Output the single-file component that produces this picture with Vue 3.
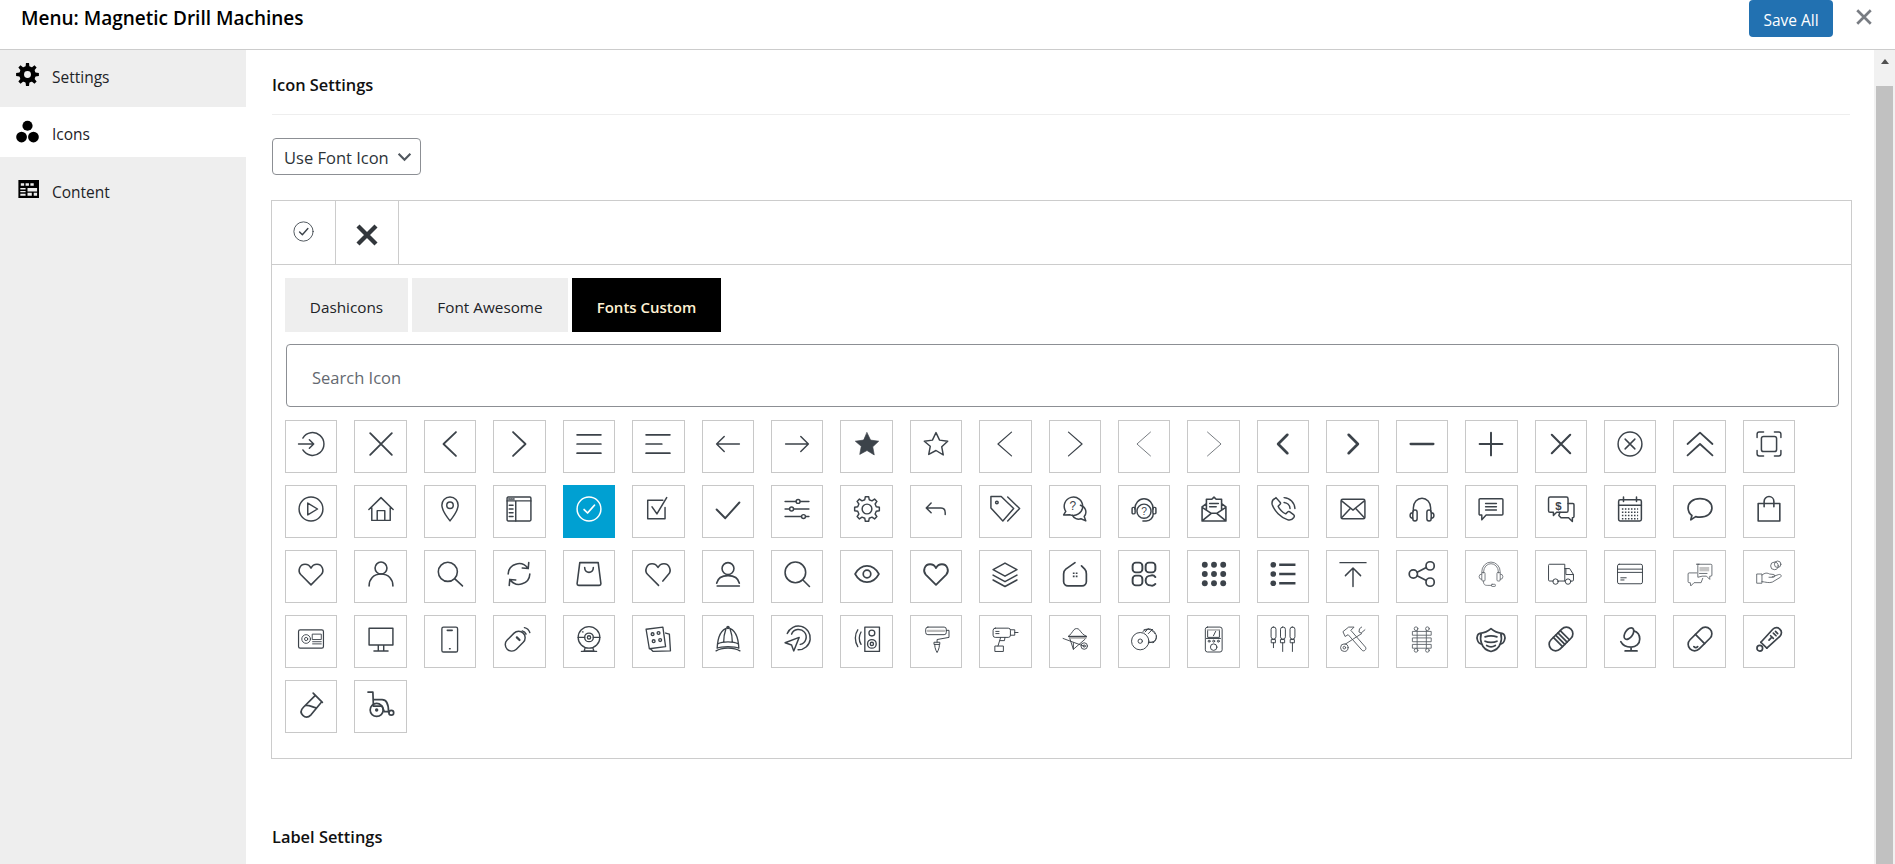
<script setup>
function gear(cx, cy, ro, ri, n) {
  let d = ''
  const step = (Math.PI * 2) / n
  for (let i = 0; i < n; i++) {
    const a = i * step - Math.PI / 2
    const pts = [
      [ri, a - step * 0.3],
      [ro, a - step * 0.17],
      [ro, a + step * 0.17],
      [ri, a + step * 0.3]
    ]
    pts.forEach(([r, t], j) => {
      const x = (cx + r * Math.cos(t)).toFixed(2)
      const y = (cy + r * Math.sin(t)).toFixed(2)
      d += (i === 0 && j === 0 ? 'M' : 'L') + x + ' ' + y
    })
  }
  return d + 'z'
}
const qm = (x, y, s) => `<text x="${x}" y="${y}" font-size="${s}" text-anchor="middle" fill="currentColor" stroke="none" font-family="Liberation Sans">?</text>`
const w = (sw, inner) => `<g stroke-width="${sw >= 1 ? (sw * 1.12).toFixed(2) : sw}">${inner}</g>`
const heart = 'M12 22 2.5 12.5C-.5 9 1.5 3 6.5 3 9 3 11 4.5 12 6.5 13 4.5 15 3 17.5 3c5 0 7 6 4 9.5z'
const checkCircle = '<circle cx="12" cy="12" r="11"/><path d="M7.5 12.5l3.2 3.2L17 8.5" stroke-width="1.6"/>'

const icons = [
  // row 1
  '<path d="M4.5 6.5a10.5 10.5 0 1 1 0 11"/><path d="M.5 12h14M10.5 8l4 4-4 4"/>',
  w(1.5, '<path d="M2 2l20 20M22 2 2 22"/>'),
  w(1.5, '<path d="M17.5 1 6 12l11.5 11"/>'),
  w(1.5, '<path d="M6.5 1 18 12 6.5 23"/>'),
  w(1.4, '<path d="M1 3.5h22M1 12h22M1 20.5h22"/>'),
  w(1.4, '<path d="M1 3.5h22M1 12h14.5M1 20.5h22"/>'),
  '<path d="M1.5 12h21M8.5 5l-7 7 7 7"/>',
  '<path d="M1.5 12h21M15.5 5l7 7-7 7"/>',
  '<path fill="currentColor" stroke-width=".6" d="M12 1.5l3.3 6.9 7.5 1-5.5 5.2 1.4 7.5L12 18l-6.7 3.6 1.4-7.5L1.2 9.4l7.5-1z"/>',
  '<path d="M12 1.5l3.3 6.9 7.5 1-5.5 5.2 1.4 7.5L12 18l-6.7 3.6 1.4-7.5L1.2 9.4l7.5-1z"/>',
  w(1, '<path d="M18 1 5.5 12 18 23"/>'),
  w(1, '<path d="M6 1l12.5 11L6 23"/>'),
  '<g stroke-width=".75" opacity=".85"><path d="M18 1 5.5 12 18 23"/></g>',
  '<g stroke-width=".75" opacity=".85"><path d="M6 1l12.5 11L6 23"/></g>',
  w(2.2, '<path d="M16 3.5 7.5 12l8.5 8.5"/>'),
  w(2.2, '<path d="M8 3.5l8.5 8.5L8 20.5"/>'),
  w(1.9, '<path d="M1.5 12h21"/>'),
  w(1.6, '<path d="M1.5 12h21M12 1.5v21"/>'),
  w(1.7, '<path d="M3.5 3.5l17 17M20.5 3.5l-17 17"/>'),
  '<circle cx="12" cy="12" r="11"/><path d="M7.5 7.5l9 9M16.5 7.5l-9 9"/>',
  w(1.5, '<path d="M.5 12 12 1.5 23.5 12M.5 22.5 12 12l11.5 10.5"/>'),
  '<path d="M1 6V3a2 2 0 0 1 2-2h4M17 1h4a2 2 0 0 1 2 2v3M23 18v3a2 2 0 0 1-2 2h-4M7 23H3a2 2 0 0 1-2-2v-3"/><rect x="5" y="5" width="14" height="14" rx="2" stroke-width="1.4"/>',
  // row 2
  '<circle cx="12" cy="12" r="11"/><path d="M9 6.5 18 12l-9 5.5z"/>',
  '<path d="M.8 12.5 12 1.5l11.2 11M3.5 10.5v12h17v-12M8.5 22.5v-9h7v9"/>',
  '<path d="M12 1C7.5 1 4.5 4.5 4.5 8.5c0 5 7.5 14.5 7.5 14.5s7.5-9.5 7.5-14.5C19.5 4.5 16.5 1 12 1z"/><circle cx="12" cy="8.5" r="3"/>',
  '<rect x="1" y="1" width="22" height="22" rx="1"/><path d="M1 4.5h22M9 4.5V23M3 8.5h3.5M3 12h3.5M3 15.5h3.5M3 19h3.5M2.5 2.8h1M4.5 2.8h1M6.5 2.8h1"/>',
  checkCircle,
  '<path d="M18.5 10.5V21H2.5V4h14"/><path d="M6.5 10l4.5 6.5L20 1.5" stroke-width="1.4"/>',
  w(1.6, '<path d="M1.5 12.5l8 8L22.5 6"/>'),
  '<path d="M1 5h22M1 12h22M1 19h22"/><circle cx="13" cy="5" r="1.8" fill="#fff"/><circle cx="7" cy="12" r="1.8" fill="#fff"/><circle cx="18" cy="19" r="1.8" fill="#fff"/>',
  `<path d="${gear(12, 12, 11.5, 8.8, 8)}"/><circle cx="12" cy="12" r="4.5"/>`,
  '<path d="M7.5 6.5 3 11l4.5 4.5M3 11h13.5c2.5 0 4 1.7 4 4.5v1.5"/>',
  '<path d="M-1 .5h9.5L20 11.500 10 23-1 11z"/><path d="M14.500 1 25.500 11.500 14.500 23"/><circle cx="4.500" cy="6" r="1.200"/>',
  `<path d="M1.500 17.500l2-3.300a8.500 8.500 0 1 1 4 3.200z"/><path d="M17 8.500a6.500 6.500 0 0 1 3.500 10.500l1.500 4-4.500-2a6.500 6.500 0 0 1-8-3.300"/>${qm(10, 13, 11)}`,
  `<circle cx="12" cy="14" r="6.500"/><path d="M3.500 12a8.500 9.500 0 0 1 17 0"/><rect x="1" y="10.500" width="2.800" height="6" rx="1"/><rect x="20.200" y="10.500" width="2.800" height="6" rx="1"/><path d="M20.500 16.500c0 3.500-2.500 6.500-6.500 6.500h-3"/>${qm(12, 17.500, 9.500)}`,
  w(1.3, '<path d="M1 10v13h22V10M1 10l4-3M23 10l-4-3M1 23l8.500-7h5L23 23M1 10.500l8.500 5.500M23 10.500l-8.500 5.500M5 13V3h5l2-2 2 2h5v10M8 7h8M8 10h6"/>'),
  '<path d="M5.500 1.500 9.500 6c.5.700.3 1.200-.2 1.700L7.500 9.500c1 2.500 4.500 6 7 7l1.800-1.800c.5-.5 1-.7 1.700-.2l4 3c.8.700.5 1.500 0 2.300-1.500 2-3.500 3-6 2-6-2-12-8-14-14-.5-2.500.5-4.500 2.500-5.500.6-.4 1-.4 1.500 0z"/><path d="M13 6a6 6 0 0 1 5.500 5.500M13 1.500a10.500 10.500 0 0 1 10 10"/>',
  '<rect x="1" y="3" width="22" height="18" rx="1.500"/><path d="M1.500 4.500 12 13l10.500-8.500M1.500 20l8-8.500M22.500 20l-8-8.500"/>',
  '<path d="M4 14v-3a8 9 0 0 1 16 0v3"/><rect x="3.500" y="13" width="4" height="10" rx="2"/><rect x="16.500" y="13" width="4" height="10" rx="2"/><path d="M3.500 15.500a2.500 2.500 0 0 0 0 5M20.500 15.500a2.500 2.500 0 0 1 0 5"/>',
  '<path d="M2 2.500h20a1 1 0 0 1 1 1v13a1 1 0 0 1-1 1H7.500l-4 4.500v-4.500H2a1 1 0 0 1-1-1v-13a1 1 0 0 1 1-1z"/><path d="M7 7h10M7 10h10M7 13h10"/>',
  '<path d="M2 1h15a1.500 1.500 0 0 1 1.500 1.500v11a1.500 1.500 0 0 1-1.500 1.500H8l-3 3v-3H2a1.500 1.500 0 0 1-1.500-1.500v-11A1.500 1.500 0 0 1 2 1z"/><path d="M18.500 7H23a1 1 0 0 1 1 1v11a1 1 0 0 1-1 1h-.5v3.500L19 20h-7l-2-2 1-3"/><text x="9.500" y="12.500" font-size="10.500" font-weight="700" text-anchor="middle" fill="currentColor" stroke="none" font-family="Liberation Sans">$</text>',
  '<rect x="1.500" y="3.500" width="21" height="19.500" rx="1.500" stroke-width="1.400"/><path d="M1.500 8.500h21M6 1v4M18 1v4" stroke-width="1.400"/><path d="M4.500 12h15M4.500 15h15M4.500 18h15M4.500 21h15" stroke-dasharray="1.400 1.400" stroke-width="1.200" stroke-linecap="butt"/>',
  w(1.4, '<path d="M12 2.500c6.500 0 11 3.500 11 8.500s-4.500 8.500-11 8.500c-1.200 0-2.500-.1-4-.5L3.500 22l1-4C2.500 16.500 1 14 1 11c0-5 4.500-8.500 11-8.500z"/>'),
  w(1.3, '<path d="M2 7h20v16H2zM7.500 10V5a4.500 4.500 0 0 1 9 0v5"/>'),
  // row 3
  w(1.3, `<path d="${heart}"/>`),
  w(1.3, '<circle cx="12" cy="6.500" r="5.500"/><path d="M1 23c0-6 4-11 11-11s11 5 11 11"/>'),
  w(1.3, '<circle cx="10" cy="10" r="8.800"/><path d="M16.500 16.500l7 6.500"/>'),
  w(1.3, '<path d="M2 12A10 10 0 0 1 20 6.500M21 1.500 20.500 7l-5.500-.5M22 12A10 10 0 0 1 4 17.500M3 22.500 3.500 17l5.500.5"/>'),
  w(1.3, '<path d="M3.500 1.500h17L23 21a1.500 1.500 0 0 1-1.500 1.500h-19A1.500 1.500 0 0 1 1 21zM8 6c0 6 8 6 8 0"/>'),
  w(1.3, '<path d="M12.500 22.500 2.500 12.500C-1 9 1.500 2.500 6.500 2.500c2.500 0 4.500 1.500 5.500 3.500 1-2 3-3.500 5.500-3.500 5 0 7.500 6.500 4 10L16.500 18.500"/>'),
  w(1.3, '<circle cx="12" cy="7" r="5.500"/><path d="M1.500 20.500C2.500 16 6.500 13.500 12 13.500s9.500 2.500 10.500 7M2 23h20.500"/>'),
  w(1.3, '<circle cx="10.500" cy="10.500" r="9.500"/><path d="M17.500 17.500l6 6"/>'),
  w(1.4, '<path d="M1 12C4 6.500 8 4.500 12 4.500s8 2 11 7.500c-3 5.500-7 7.500-11 7.500S4 17.500 1 12z"/><circle cx="12" cy="12" r="3.500"/>'),
  w(1.5, `<path d="${heart}"/>`),
  w(1.3, '<path d="M12 2 23 8 12 14 1 8zM1 13l11 6 11-6M1 17.500l11 6 11-6"/>'),
  w(1.4, '<path d="M12 1.500 3.500 7.500C1.500 9 1.500 10 1.500 12v7a4 4 0 0 0 4 4h13a4 4 0 0 0 4-4v-7c0-2 0-3-1.500-4.500L18 4.500"/><path fill="currentColor" stroke="none" d="M10 10.500h1.600v1.600H10zM12.700 10.500h1.600v1.600h-1.600zM10 13.300h1.600v1.600H10zM12.700 13.300h1.600v1.600h-1.600z"/>'),
  w(1.6, '<rect x="1.500" y="1.500" width="9" height="9" rx="3"/><rect x="13.500" y="1.500" width="9" height="9" rx="3"/><rect x="1.500" y="13.500" width="9" height="9" rx="3"/><path d="M22.500 14.800A4 4 0 0 0 18 13.500a4.500 4.500 0 0 0 0 9 4 4 0 0 0 4.500-1.300"/>'),
  '<g fill="currentColor" stroke="none"><circle cx="3.500" cy="3.500" r="2.700"/><circle cx="12" cy="3.500" r="2.700"/><circle cx="20.500" cy="3.500" r="2.700"/><circle cx="3.500" cy="12" r="2.700"/><circle cx="12" cy="12" r="2.700"/><circle cx="20.500" cy="12" r="2.700"/><circle cx="3.500" cy="20.500" r="2.700"/><circle cx="12" cy="20.500" r="2.700"/><circle cx="20.500" cy="20.500" r="2.700"/></g>',
  '<g fill="currentColor" stroke="none"><circle cx="3" cy="3.500" r="2.600"/><circle cx="3" cy="12" r="2.600"/><circle cx="3" cy="20.500" r="2.600"/></g><path d="M8.500 3.500h15M8.500 12h15M8.500 20.500h15" stroke-width="2.200" stroke-linecap="butt"/>',
  '<path d="M0 1.500h24M12 23.500V7M5 13.500 12 6.500l7 7"/>',
  w(1.4, '<circle cx="19.500" cy="4.500" r="3.800"/><circle cx="4" cy="12" r="3.800"/><circle cx="19.500" cy="19.500" r="3.800"/><path d="M7.500 10.300l8.500-4.200M7.500 13.700l8.500 4.200"/>'),
  '<g stroke-width=".75" opacity=".8"><path d="M3.500 11v-1a8.500 9 0 0 1 17 0v1M5.200 11v-1a6.800 7.500 0 0 1 13.600 0v1"/><rect x="3.500" y="10.500" width="3" height="8" rx="1"/><rect x="17.500" y="10.500" width="3" height="8" rx="1"/><path d="M3.500 12a2 2 0 0 0 0 5M20.500 12a2 2 0 0 1 0 5M5 18.500c0 3 1 4 3.500 4h4"/><rect x="12.500" y="21.500" width="3.500" height="2" rx=".5"/></g>',
  '<g stroke-width=".9"><path d="M5 18.500H1.500a1 1 0 0 1-1-1V4a1 1 0 0 1 1-1h14v15.500H9M15.500 7H20l3.500 5.500v5a1 1 0 0 1-1 1H21M15.500 18.500h.5M16.500 7v5.500h7"/><circle cx="7" cy="19" r="2.500"/><circle cx="18.500" cy="19" r="2.500"/></g>',
  '<g stroke-width=".9"><rect x=".5" y="3" width="23" height="18" rx="1.500"/><path d="M.5 7.500h23M.5 10.500h23M3.500 15.500h5M3.500 17.500h3"/></g>',
  '<g stroke-width=".8" opacity=".85"><path d="M9 3h13a1 1 0 0 1 1 1v9a1 1 0 0 1-1 1h-1v3l-3-3h-4l-4 1V4a1 1 0 0 1 1-1z"/><path d="M9 11H2a1 1 0 0 0-1 1v7a1 1 0 0 0 1 1h1l.5 3 3-3H13l1.500-4"/><path d="M11.500 5.500h9v4h-9z" fill="#bbb" stroke="none"/><path d="M11.500 11.500h7"/></g>',
  '<g stroke-width=".8" opacity=".85"><circle cx="17" cy="4.500" r="3.500"/><circle cx="20" cy="3" r="3"/><path d="M1 12h4.500v8.500H1zM5.500 13c3-2.500 5-2 7-1l4 .5c1.500.5 1 2.500-.5 2.500h-4M15 14.500l6-2c2-.5 3 1.200 1.500 2.500L15 19.500c-3 1-6 0-9.500-.5"/></g>',
  // row 4
  '<g stroke-width=".85"><rect x=".5" y="3.500" width="23" height="17" rx="1.500" stroke-width="1.100"/><circle cx="7.500" cy="12" r="4"/><circle cx="7.500" cy="12" r="1.500"/><path d="M13.500 7.500h8v5h-8zM13.500 14.500h8M13.500 16.500h8"/></g>',
  w(1.2, '<path d="M1 2h22v15.500H1zM9.500 17.500V23M14.500 17.500V23M5.500 23h13"/>'),
  w(1.1, '<rect x="4.500" y="1" width="14.500" height="23" rx="1.500"/><path d="M9.500 4h4.500" stroke-width="1.500"/><path d="M11.500 21h.7"/>'),
  w(1.2, '<rect x="-2" y="8" width="21" height="12" rx="6" transform="rotate(-45 8.500 14)"/><path d="M10 10.500l2.500 2.500" stroke-width="2"/><path d="M15 4.500a5 5 0 0 1 3.500 3M17 1.500a7 7 0 0 1 5 4.500"/>'),
  w(1.1, '<circle cx="12" cy="10.500" r="10"/><circle cx="12" cy="10.500" r="4"/><circle cx="12" cy="10.500" r="1.500"/><path d="M2 10.500h6M16 10.500h6M8.500 20l-1 3h9l-1-3M5 23.500h14M6 5.500h.5"/>'),
  w(1.1, '<path d="M1 3l15.500-2 2.500 18L4 21z"/><path d="M19 6.500l3.500 1L23.500 23l-16 .5-2.500-2.500"/><circle cx="7" cy="7.500" r="1.300"/><circle cx="12.500" cy="6.500" r="1.300"/><circle cx="8" cy="14" r="1.300"/><circle cx="14" cy="13" r="1.300"/>'),
  w(1.1, '<path d="M12 1.500C6 3 2.500 9 2 20.500 6 18.500 18 18.500 22 20.500 21.500 9 18 3 12 1.500zM2.500 16.500C7 14 17 14 21.500 16.500M10 3C8.500 7 8 10 8 15M14 3c1.500 4 2 7 2 12M1 23c5-3.500 17-3.500 22 0"/><circle cx="12" cy="1.300" r="1"/>'),
  w(1.2, '<path d="M3 7A11 11 0 1 1 13 22M7 7.500a7 7 0 1 1 8 9.500"/><path d="M1 15.500l13-5-5 12.500-2-5.500z"/>'),
  w(1.1, '<path d="M10 1h13.500v22.500H10z"/><circle cx="16.500" cy="6.500" r="2.700"/><circle cx="16.500" cy="16.500" r="4"/><circle cx="16.500" cy="16.500" r="1.500"/><path d="M6.500 5.500c-2 3.500-2 8 0 11.500M3.500 3.500c-3 4-3 11 0 15.500"/>'),
  '<g stroke-width=".9" transform="translate(1.500 0)"><rect x="1" y="1" width="19" height="7" rx="2"/><path d="M20 4h2.500v6.500l-11 2V15"/><path d="M9 15h5v2H9zM9.500 17c-.5 2 .5 4 1 5.500l1 2 1-2c.5-1.500 1.500-3.500 1-5.500"/><path d="M3 4.500h15" stroke="#bbb" stroke-width="2"/></g>',
  '<g stroke-width=".9"><rect x="1" y="2" width="16" height="8.500" rx="2"/><path d="M3.500 5h3M3.500 7h3M17 3.500h4v5h-4M21 6h3M8 10.500l-2.500 8M12 10.500l-.5 3h-4M3 18.500h7.500v5H3z"/></g>',
  '<g stroke-width=".85"><path d="M6 9.500C8 8 9 6 11 3.500c1-1.500 4-1.500 5 0 2 2.500 3 4.500 6.500 6zM6 9.500h16.500l-1 2.500-11 9.500-4-12M1 11.500l19 7M10.500 21.500v-6"/><circle cx="20.500" cy="18.500" r="3"/><circle cx="20.500" cy="18.500" r="1"/><path d="M7 11h15" stroke="#aaa" stroke-width="1.500"/></g>',
  '<g stroke-width=".9"><circle cx="8.500" cy="14" r="8"/><circle cx="8.500" cy="14" r="2"/><path d="M11 5c4-3 8-3.500 11 1s1 8-3 9l-3 .5M12 3.500c4-1.500 8 0 10 3.500M16 2.500l-3 3M20 3l-4 4M23.500 9c0 3-1 5.500-3 6.500M16.500 15h4"/></g>',
  '<g stroke-width=".9"><rect x="4" y="1" width="15.500" height="23" rx="2"/><path d="M6.500 3.500H17v7H6.500zM13.500 5l-2 4M5 11.500h13"/><path d="M6 3.500h11" stroke="#bbb" stroke-width="1.500"/><circle cx="7.500" cy="14" r=".9"/><circle cx="11.700" cy="14" r=".9"/><circle cx="16" cy="14" r=".9"/><circle cx="11.700" cy="19.500" r="3"/></g>',
  '<g stroke-width=".9"><rect x="1" y="1" width="4.500" height="11" rx="2"/><rect x="9.700" y="1" width="4.500" height="11" rx="2"/><rect x="18.500" y="1" width="4.500" height="11" rx="2"/><path d="M1.500 12.500H5v3H1.500zM10 12.500h3.500v3H10zM19 12.500h3.500v3H19zM3.200 15.500V20M11.700 15.500v8M20.700 15.500v8"/></g>',
  '<g stroke-width=".85" opacity=".9"><path d="M3 5l5-4h5l-3 3 13.500 15.500c1.500 2-1.500 4.500-3 3L7.500 8 5 9.500z"/><path d="M23 3.500l-3.500 3-2-1 .5-3 2-1.500M20 7 4.500 17"/><circle cx="4" cy="20" r="3.500"/><circle cx="4" cy="20" r="1.200"/></g>',
  '<g stroke-width=".8" opacity=".85" transform="translate(1.500 0)"><circle cx="5" cy="2.500" r="1.700"/><circle cx="15.500" cy="2.500" r="1.700"/><circle cx="5" cy="22.500" r="1.700"/><circle cx="15.500" cy="22.500" r="1.700"/><path d="M2 5h17v3.500H2zM2 11h17v3.500H2zM2 17h17v3.500H2zM6 4v17M14.500 4v17"/></g>',
  w(1.4, '<path d="M3 6.500c3 0 6-1.500 9-4 3 2.500 6 4 9 4 1.500 6 .5 15-9 17-9.500-2-10.500-11-9-17zM3 6.500C-.5 6.500-1.500 10-.5 13c.5 2 2 3.500 4.500 4M21 6.500c3.500 0 4.500 3.500 3.500 6.500-.5 2-2 3.500-4.500 4M6.500 10c3-1 8-1 11 0M6.500 14c3 1.500 8 1.500 11 0M8 18c2.500 1.500 5.500 1.500 8 0"/>'),
  w(1.4, '<g transform="rotate(-45 12 12)"><rect x="-1" y="6" width="26" height="12" rx="6"/><path d="M8 6v12M11 6v12M14 6v12M17 6v12"/></g>'),
  w(1.4, '<ellipse cx="11" cy="7" rx="3.500" ry="6" transform="rotate(35 11 7)"/><path d="M15.500 4.500c3.500 1 5.500 4 5.500 7.500 0 4.500-3.500 7.500-8 7.500-4.500 0-8-2-9.500-5M13 19.500V23M7.500 23h11"/>'),
  w(1.4, '<g transform="rotate(-45 12 12)"><rect x="-1" y="6" width="26" height="12" rx="6"/><path d="M12 6v12M3 13c0 1.500 1 2.500 2.500 2.500"/></g>'),
  w(1.4, '<path d="M4.500 15 15.500 3c2-2 5-2 6.500 0 2 1.500 2 4.500 0 6.500L10 20.500"/><circle cx="3.500" cy="20.500" r="2.600"/><path d="M4.500 15l5.500 5.500M13.500 9l2.500 2.500M16 6.500l2.500 2.500M12 13l2-2M18 5l2 2"/>'),
  // row 5
  w(1.4, '<path d="M14 2 22.500 10.500M16 4 5 15c-3 3-2.500 5.500-.5 7.500s4.500 2.500 7.500-.5L21 11M6.500 13.500c3-1 6 1 10 2"/>'),
  w(1.4, '<path d="M0 1h4.500l.5 13M5 8h8c5 0 6 5 6 11.500M5 14h8l2 5h4.500"/><circle cx="8" cy="17.500" r="6"/><circle cx="8" cy="17.500" r=".8" fill="currentColor"/><circle cx="21.500" cy="20" r="2.200"/>')
]
</script>

<template>
  <div class="page">
    <header class="topbar">
      <h1 class="menu-title">Menu: Magnetic Drill Machines</h1>
      <button class="save">Save All</button>
      <svg class="close" viewBox="0 0 16 16"><path d="M2 2l12 12M14 2 2 14" /></svg>
    </header>
    <div class="body">
      <aside class="side">
        <a class="nav nav-settings">
          <svg class="nav-icon" viewBox="0 0 24 24">
            <path :d="gear(12, 12, 12, 8.5, 8)" fill="#000" />
            <circle cx="12" cy="12" r="6" fill="none" stroke="#000" stroke-width="5" />
            <circle cx="12" cy="12" r="3.6" fill="#eee" />
          </svg>
          <span>Settings</span>
        </a>
        <a class="nav nav-icons">
          <svg class="nav-icon" viewBox="0 0 24 24">
            <circle cx="12" cy="6" r="5.3" />
            <circle cx="5.8" cy="17.8" r="5.6" />
            <circle cx="18.2" cy="17.8" r="5.6" />
          </svg>
          <span>Icons</span>
        </a>
        <a class="nav nav-content">
          <svg class="nav-icon" viewBox="0 0 24 24">
            <path fill-rule="evenodd" d="M2.5 3H24v19H2.500zM5 6.500V9h3.500V6.500zM10 6.500V9h3.500V6.500zM15 6.500V9h3.500V6.500zM4.500 11.500V13H10v-1.500zM4.500 14.500V16H10v-1.500zM4.500 17.500v2H10v-2zM12 11.500V15h10v-3.500zM12 16.500v3h4.500v-3zM18.500 16.500v3H22v-3z" />
          </svg>
          <span>Content</span>
        </a>
      </aside>
      <main class="main">
        <h2 class="section-title ruled">Icon Settings</h2>
        <div class="select">
          <span>Use Font Icon</span>
          <svg viewBox="0 0 14 9"><path d="M1.5 1.5 7 7l5.500-5.500" /></svg>
        </div>
        <section class="box">
          <div class="chosen">
            <div class="chosen-cell">
              <svg class="chosen-check" viewBox="0 0 24 24" v-html="checkCircle"></svg>
            </div>
            <div class="chosen-cell">
              <svg class="chosen-x" viewBox="0 0 20 20"><path d="M2.5 2.5l15 15M17.500 2.500l-15 15" /></svg>
            </div>
          </div>
          <div class="picker">
            <div class="tabs">
              <button class="tab tab-dash">Dashicons</button>
              <button class="tab tab-fa">Font Awesome</button>
              <button class="tab tab-custom">Fonts Custom</button>
            </div>
            <input class="search" type="text" placeholder="Search Icon" />
            <div class="grid">
              <div v-for="(ic, i) in icons" :key="i" class="cell" :class="{ active: i === 26 }">
                <svg viewBox="0 0 24 24" v-html="ic"></svg>
              </div>
            </div>
          </div>
        </section>
        <h2 class="section-title label-title">Label Settings</h2>
      </main>
      <div class="scrollbar">
        <span class="arrow"></span>
        <span class="thumb"></span>
      </div>
    </div>
  </div>
</template>

<style>
html, body { overflow: hidden; }
</style>

<style scoped>
.page {
  height: 864px;
  display: flex;
  flex-direction: column;
  overflow: hidden;
  background: #fff;
  color: #1d2327;
  font-family: "Open Sans", "Noto Sans", sans-serif;
}
.topbar {
  height: 49px;
  flex: none;
  display: flex;
  align-items: flex-start;
  border-bottom: 1px solid #ccc;
  box-sizing: content-box;
  padding-left: 21px;
}
.menu-title {
  margin: 0;
  flex: 1;
  font-size: 19px;
  font-weight: 600;
  line-height: 37px;
  color: #000;
}
.save {
  width: 84px;
  height: 37px;
  border: 0;
  border-radius: 4px;
  background: #2271b1;
  color: #fff;
  font: 400 15.5px "Open Sans", sans-serif;
  padding: 2px 0 0;
}
.close {
  width: 18px;
  height: 18px;
  margin: 8px 22px 0 22px;
  fill: none;
  stroke: #787c82;
  stroke-width: 2.4;
}
.body {
  flex: 1;
  min-height: 0;
  display: flex;
}
.side {
  width: 246px;
  flex: none;
  background: #eee;
}
.nav {
  display: flex;
  align-items: flex-start;
  gap: 13px;
  padding-left: 16px;
  font-size: 15.5px;
  line-height: 20px;
  color: #1d2327;
  box-sizing: border-box;
}
.nav-settings { height: 57px; padding-top: 17px; }
.nav-icons { height: 50px; padding-top: 17px; background: #fff; }
.nav-content { height: 58px; padding-top: 25px; }
.nav-icon {
  width: 23px;
  height: 23px;
  flex: none;
  margin-top: -4px;
}
.nav-content .nav-icon { margin-top: -5px; }
.main {
  flex: 1;
  min-width: 0;
  padding: 25px 0 0 25px;
  overflow: hidden;
}
.section-title {
  margin: 0;
  font-size: 16.4px;
  line-height: 20px;
  font-weight: 600;
  color: #111;
}
.ruled {
  margin-left: 1px;
  margin-right: 24px;
  padding-bottom: 19px;
  border-bottom: 1px solid #eee;
}
.select {
  margin: 23px 0 0 1px;
  width: 149px;
  height: 37px;
  box-sizing: border-box;
  border: 1px solid #8c8f94;
  border-radius: 4px;
  display: flex;
  align-items: center;
  justify-content: space-between;
  padding: 2px 8px 0 11px;
  font-size: 16.5px;
  color: #2c3338;
}
.select svg {
  width: 15px;
  height: 10px;
  fill: none;
  stroke: #50575e;
  stroke-width: 2;
  margin-top: -2px;
}
.box {
  margin: 25px 22px 0 0;
  border: 1px solid #ccc;
  height: 559px;
  box-sizing: border-box;
}
.chosen {
  height: 64px;
  box-sizing: border-box;
  display: flex;
  border-bottom: 1px solid #ccc;
}
.chosen-cell {
  width: 63.5px;
  box-sizing: border-box;
  border-right: 1px solid #ccc;
  color: #3c434a;
  display: flex;
  justify-content: center;
}
.chosen-check {
  width: 21px;
  height: 21px;
  margin-top: 20px;
  fill: none;
  stroke: currentColor;
  stroke-width: 1;
  stroke-linecap: round;
  stroke-linejoin: round;
}
.chosen-x {
  width: 24px;
  height: 24px;
  margin-top: 22px;
  fill: none;
  stroke: #32373c;
  stroke-width: 3.6;
}
.picker {
  padding: 13px 0 0 13px;
}
.tabs {
  display: flex;
  gap: 4px;
}
.tab {
  height: 54px;
  border: 0;
  padding: 3px 0 0;
  background: #eee;
  color: #1d2327;
  font: 400 15.3px "Open Sans", sans-serif;
}
.tab-dash { width: 123px; }
.tab-fa { width: 156px; }
.tab-custom {
  width: 149px;
  background: #000;
  color: #fff2d4;
  font-size: 15px;
  font-weight: 600;
}
.search {
  display: block;
  margin: 12px 0 0 1px;
  width: 1553px;
  height: 63px;
  box-sizing: border-box;
  border: 1px solid #8c8f94;
  border-radius: 4px;
  padding: 3px 25px 0;
  font: 400 16.5px "Open Sans", sans-serif;
  outline: none;
}
.search::placeholder {
  color: #646970;
  opacity: 1;
}
.grid {
  margin-top: 13px;
  display: grid;
  grid-template-columns: repeat(22, 52.43px);
  grid-auto-rows: 53px;
  gap: 12px 17px;
}
.cell {
  border: 1px solid #c8c8c8;
  box-sizing: border-box;
  display: flex;
  align-items: center;
  justify-content: center;
  padding-bottom: 5px;
  color: #3c434a;
}
.cell svg {
  width: 26px;
  height: 26px;
  overflow: visible;
  fill: none;
  stroke: currentColor;
  stroke-width: 1.35;
  stroke-linecap: round;
  stroke-linejoin: round;
}
.cell.active {
  background: #00a0d2;
  border-color: #00a0d2;
  color: #fff;
}
.label-title {
  margin: 68px 0 0 1px;
}
.scrollbar {
  width: 21px;
  flex: none;
  background: #f1f1f1;
  display: flex;
  flex-direction: column;
  align-items: center;
}
.arrow {
  margin-top: 9px;
  width: 0;
  height: 0;
  border-left: 4.5px solid transparent;
  border-right: 4.5px solid transparent;
  border-bottom: 5px solid #505050;
}
.thumb {
  margin-top: 22px;
  width: 17px;
  flex: 1;
  background: #c1c1c1;
}
</style>
